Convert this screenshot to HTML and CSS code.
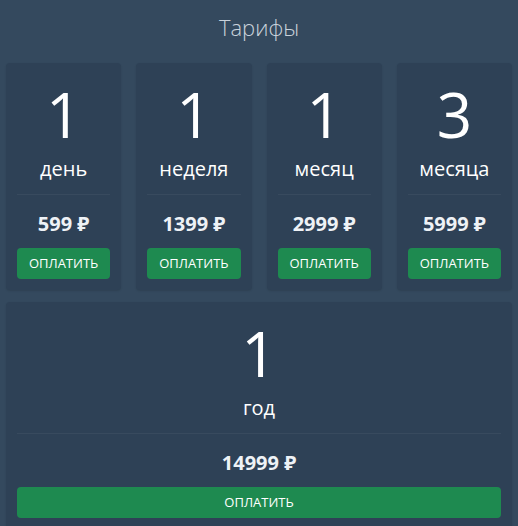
FILE: index.html
```html
<!DOCTYPE html>
<html lang="ru">
  <head>
    <meta charset="UTF-8" />
    <title>Тарифы</title>
    <link rel="stylesheet" href="styles.css">
  </head>
  <body>
    <div class="page">
      <h1 class="title">Тарифы</h1>

      <div class="plans">
        <div class="plan">
          <div class="plan-count">1</div>
          <div class="plan-unit">день</div>
          <div class="plan-price">599 ₽</div>
          <a href="###" class="plan-btn">Оплатить</a>
        </div>

        <div class="plan">
          <div class="plan-count">1</div>
          <div class="plan-unit">неделя</div>
          <div class="plan-price">1399 ₽</div>
          <a href="###" class="plan-btn">Оплатить</a>
        </div>

        <div class="plan">
          <div class="plan-count">1</div>
          <div class="plan-unit">месяц</div>
          <div class="plan-price">2999 ₽</div>
          <a href="###" class="plan-btn">Оплатить</a>
        </div>

        <div class="plan">
          <div class="plan-count">3</div>
          <div class="plan-unit">месяца</div>
          <div class="plan-price">5999 ₽</div>
          <a href="###" class="plan-btn">Оплатить</a>
        </div>

        <div class="plan plan-wide">
          <div class="plan-count">1</div>
          <div class="plan-unit">год</div>
          <div class="plan-price">14999 ₽</div>
          <a href="###" class="plan-btn">Оплатить</a>
        </div>
      </div>
    </div>
  </body>
</html>
```

FILE: styles.css
```css
body {
  margin: 0;

  background-color: #34495e;

  font-family: "Open Sans", "Noto Sans", sans-serif;

  color: #ffffff;
}

.page {
  padding: 0 6px;
}

.title {
  margin: 0;

  height: 63px;

  line-height: 54px;

  text-align: center;

  font-size: 22px;

  font-weight: 300;

  color: #c9d2db;
}

.plans {
  display: grid;

  grid-template-columns: repeat(4, 1fr);

  column-gap: 15px;

  row-gap: 12px;
}

.plan {
  display: flex;

  flex-direction: column;

  padding: 11px;

  background-color: #2e4156;

  border-radius: 4px;

  box-shadow: 0 1px 2px rgba(0, 0, 0, 0.12);

  text-align: center;
}

.plan-wide {
  grid-column: 1 / 5;
}

.plan-count {
  height: 80px;

  line-height: 80px;

  font-size: 62px;
}

.plan-unit {
  height: 30px;

  line-height: 30px;

  padding-bottom: 10px;

  border-bottom: 1px solid rgba(255, 255, 255, 0.05);

  font-size: 20px;
}

.plan-price {
  margin-top: 14px;

  height: 30px;

  line-height: 30px;

  font-size: 20px;

  font-weight: 700;

  color: #eef2f6;
}

.plan-btn {
  display: block;

  margin-top: 9px;

  height: 31px;

  line-height: 31px;

  background-color: #1e8a50;

  border-radius: 4px;

  color: #ffffff;

  text-decoration: none;

  text-transform: uppercase;

  font-size: 13px;

  font-weight: 400;
}
```
